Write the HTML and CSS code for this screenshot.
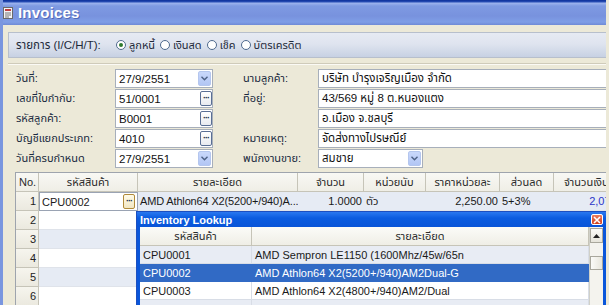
FILE: index.html
```html
<!DOCTYPE html>
<html>
<head>
<meta charset="utf-8">
<title>Invoices</title>
<link rel="stylesheet" href="styles.css">
</head>
<body>
<div class="window">
  <div class="titlebar">
    <svg class="app-icon" width="10" height="12" viewBox="0 0 10 12">
      <rect x="0.5" y="0.5" width="9" height="11" fill="#f4f4f4" stroke="#6a6a6a"/>
      <rect x="2" y="2" width="6" height="2" fill="#c04040"/>
      <line x1="2" y1="6" x2="8" y2="6" stroke="#777"/>
      <line x1="2" y1="8" x2="8" y2="8" stroke="#777"/>
      <line x1="2" y1="10" x2="6" y2="10" stroke="#777"/>
    </svg>
    <span class="title">Invoices</span>
  </div>
  <div class="client">
    <div class="radio-panel">
      <span class="radio-caption">รายการ (I/C/H/T):</span>
      <span class="radio checked"><i class="dot"></i>ลูกหนี้</span>
      <span class="radio"><i class="dot"></i>เงินสด</span>
      <span class="radio"><i class="dot"></i>เช็ค</span>
      <span class="radio"><i class="dot"></i>บัตรเครดิต</span>
    </div>
    <div class="form-panel">
      <div class="form">
        <div class="col col-left">
          <div class="row"><span class="label">วันที่:</span><span class="field f-left">27/9/2551<span class="drop"><svg width="7" height="5" viewBox="0 0 7 5"><path d="M0.5 0.8 L3.5 3.8 L6.5 0.8" fill="none" stroke="#4d6185" stroke-width="1.4"/></svg></span></span></div>
          <div class="row"><span class="label">เลขที่ใบกำกับ:</span><span class="field f-left">51/0001<span class="dots">···</span></span></div>
          <div class="row"><span class="label">รหัสลูกค้า:</span><span class="field f-left">B0001<span class="dots">···</span></span></div>
          <div class="row"><span class="label">บัญชีแยกประเภท:</span><span class="field f-left">4010<span class="dots">···</span></span></div>
          <div class="row"><span class="label">วันที่ครบกำหนด</span><span class="field f-left">27/9/2551<span class="drop"><svg width="7" height="5" viewBox="0 0 7 5"><path d="M0.5 0.8 L3.5 3.8 L6.5 0.8" fill="none" stroke="#4d6185" stroke-width="1.4"/></svg></span></span></div>
        </div>
        <div class="col col-right">
          <div class="row"><span class="label label-r">นามลูกค้า:</span><span class="field f-right">บริษัท บำรุงเจริญเมือง จำกัด</span></div>
          <div class="row"><span class="label label-r">ที่อยู่:</span><span class="field f-right">43/569 หมู่ 8 ต.หนองแตง</span></div>
          <div class="row"><span class="label label-r"></span><span class="field f-right">อ.เมือง จ.ชลบุรี</span></div>
          <div class="row"><span class="label label-r">หมายเหตุ:</span><span class="field f-right">จัดส่งทางไปรษณีย์</span></div>
          <div class="row"><span class="label label-r">พนักงานขาย:</span><span class="field f-combo">สมชาย<span class="drop"><svg width="7" height="5" viewBox="0 0 7 5"><path d="M0.5 0.8 L3.5 3.8 L6.5 0.8" fill="none" stroke="#4d6185" stroke-width="1.4"/></svg></span></span></div>
        </div>
      </div>
      <div class="grid">
        <div class="hd no">No.</div>
        <div class="hd">รหัสสินค้า</div>
        <div class="hd">รายละเอียด</div>
        <div class="hd">จำนวน</div>
        <div class="hd">หน่วยนับ</div>
        <div class="hd">ราคาหน่วยละ</div>
        <div class="hd">ส่วนลด</div>
        <div class="hd hd-last">จำนวนเงิน</div>

        <div class="rn">1</div>
        <div class="c alt editor">CPU0002<span class="dots dots-cell">···</span></div>
        <div class="c alt tight">AMD Athlon64 X2(5200+/940)A...</div>
        <div class="c alt num">1.0000</div>
        <div class="c alt">ตัว</div>
        <div class="c alt num">2,250.00</div>
        <div class="c alt">5+3%</div>
        <div class="c alt num amount">2,073.38</div>

        <div class="rn">2</div><div class="c"></div><div class="c"></div><div class="c"></div><div class="c"></div><div class="c"></div><div class="c"></div><div class="c"></div>
        <div class="rn">3</div><div class="c alt"></div><div class="c alt"></div><div class="c alt"></div><div class="c alt"></div><div class="c alt"></div><div class="c alt"></div><div class="c alt"></div>
        <div class="rn">4</div><div class="c"></div><div class="c"></div><div class="c"></div><div class="c"></div><div class="c"></div><div class="c"></div><div class="c"></div>
        <div class="rn">5</div><div class="c alt"></div><div class="c alt"></div><div class="c alt"></div><div class="c alt"></div><div class="c alt"></div><div class="c alt"></div><div class="c alt"></div>
        <div class="rn">6</div><div class="c"></div><div class="c"></div><div class="c"></div><div class="c"></div><div class="c"></div><div class="c"></div><div class="c"></div>
      </div>
    </div>
  </div>

  <div class="lookup">
    <div class="lk-title"><span>Inventory Lookup</span><span class="lk-close"><svg width="8" height="8" viewBox="0 0 8 8"><path d="M1 1 L7 7 M7 1 L1 7" stroke="#fff" stroke-width="1.6"/></svg></span></div>
    <div class="lk-body">
      <div class="lk-table">
        <div class="lk-hd">รหัสสินค้า</div>
        <div class="lk-hd">รายละเอียด</div>
        <div class="lk-c lk-alt">CPU0001</div>
        <div class="lk-c lk-alt">AMD Sempron LE1150 (1600Mhz/45w/65n</div>
        <div class="lk-c lk-sel">CPU0002</div>
        <div class="lk-c lk-sel">AMD Athlon64 X2(5200+/940)AM2Dual-G</div>
        <div class="lk-c">CPU0003</div>
        <div class="lk-c">AMD Athlon64 X2(4800+/940)AM2/Dual</div>
        <div class="lk-c lk-alt"></div>
        <div class="lk-c lk-alt"></div>
      </div>
      <div class="lk-scroll">
        <div class="sb-btn"><svg width="7" height="4" viewBox="0 0 7 4"><path d="M0 4 L3.5 0 L7 4 Z" fill="#222"/></svg></div>
        <div class="sb-thumb"></div>
      </div>
    </div>
  </div>
</div>
</body>
</html>
```

FILE: styles.css
```css
* { box-sizing: border-box; }

html, body {
  margin: 0;
  padding: 0;
  width: 609px;
  height: 305px;
  overflow: hidden;
  background: #ece9d8;
  font-family: "Liberation Sans", "Noto Sans Thai", "Tlwg Typo", "Loma", "Garuda", sans-serif;
  font-size: 11px;
  color: #1a1a1a;
}

.window {
  position: relative;
  width: 606px;
  height: 305px;
  border-left: 3px solid #7a96df;
  background: #ece9d8;
  overflow: hidden;
}

.titlebar {
  height: 25px;
  display: flex;
  align-items: center;
  gap: 5px;
  background: linear-gradient(to bottom, #0b2f9a 0, #2a4fb6 2px, #9db4ee 3px, #7e9ae2 6px, #7892de 16px, #7f9ee6 22px, #6f8ad6 25px);
}

.title {
  color: #fff;
  font-weight: bold;
  font-size: 15px;
  letter-spacing: 0.2px;
  text-shadow: 1px 1px 0 rgba(40, 60, 140, 0.5);
}

.client {
  padding-left: 5px;
}

.radio-panel {
  margin-top: 7px;
  height: 26px;
  display: flex;
  align-items: center;
  border: 1px solid #b7bfcc;
  border-right: 0;
  background: linear-gradient(to bottom, #e6eaf3 0%, #dfe4ef 45%, #c7d1e3 100%);
  padding-left: 7px;
  color: #1e2a3a;
}

.radio-caption {
  width: 100px;
  font-size: 11.5px;
}

.radio {
  display: inline-flex;
  align-items: center;
  margin-right: 5px;
}

.dot {
  width: 10px;
  height: 10px;
  border: 1px solid #4f6a8e;
  border-radius: 50%;
  background: #fff;
  margin-right: 3px;
  display: inline-flex;
  align-items: center;
  justify-content: center;
}

.checked .dot::after {
  content: "";
  width: 4px;
  height: 4px;
  border-radius: 50%;
  background: #2e7a2e;
}

.form-panel {
  margin-top: 5px;
  border-top: 1px solid #cfcbba;
  box-shadow: inset 0 1px 0 #fbfaf5;
  padding: 5px 0 0 7px;
}

.form {
  display: flex;
  gap: 29px;
}

.col {
  display: flex;
  flex-direction: column;
  gap: 1px;
}

.row {
  display: flex;
  align-items: center;
  height: 19px;
}

.label {
  width: 100px;
  padding-left: 1px;
  color: #1a2a40;
}

.label-r {
  width: 76px;
}

.field {
  position: relative;
  height: 19px;
  display: flex;
  align-items: center;
  background: #fff;
  border: 1px solid #a7afbb;
  padding-left: 3px;
  font-size: 11.5px;
  color: #111;
  white-space: nowrap;
}

.f-left { width: 98px; }
.f-right { width: 300px; }
.f-combo { width: 105px; }

.drop {
  position: absolute;
  right: 1px;
  top: 1px;
  width: 13px;
  height: 15px;
  border-radius: 2px;
  background: linear-gradient(to bottom, #c9d8fb, #b2c6f4);
  border: 1px solid #b4c6ee;
  display: flex;
  align-items: center;
  justify-content: center;
}

.dots {
  position: absolute;
  right: 0;
  top: 1px;
  width: 12px;
  height: 15px;
  border: 1px solid #5a6f95;
  border-radius: 2px;
  background: linear-gradient(to bottom, #ffffff, #e8ebf0);
  font-size: 9px;
  font-weight: bold;
  line-height: 12px;
  text-align: center;
  color: #1a2a4a;
  letter-spacing: -1px;
}

.grid {
  margin-top: 4px;
  display: grid;
  grid-template-columns: 23px 99px 160px 66px 62px 74px 54px 80px;
  grid-auto-rows: 19px;
  border-top: 1px solid #9ea4ad;
  border-left: 1px solid #9ea4ad;
  width: max-content;
}

.hd {
  display: flex;
  align-items: center;
  justify-content: center;
  background: linear-gradient(to bottom, #f8f8f4, #efeee6);
  border-right: 1px solid #c6c4b8;
  border-bottom: 1px solid #c6c4b8;
  color: #2a2a2a;
  white-space: nowrap;
  overflow: hidden;
}

.hd.no { justify-content: flex-start; padding-left: 3px; }

.hd-last { justify-content: flex-start; padding-left: 10px; }

.rn {
  display: flex;
  align-items: center;
  justify-content: flex-end;
  padding-right: 2px;
  background: linear-gradient(to bottom, #f6f5ee, #ebe9df);
  border-right: 1px solid #c6c4b8;
  border-bottom: 1px solid #c6c4b8;
  color: #222;
}

.c {
  display: flex;
  align-items: center;
  padding: 0 2px;
  background: #fff;
  border-bottom: 1px solid #dfe3ea;
  white-space: nowrap;
  overflow: hidden;
  color: #1a1a1a;
}

.c.alt { background: #e6ebf4; }

.c.tight { letter-spacing: -0.15px; padding-left: 2px; }

.c.num { justify-content: flex-end; }

.c.amount { color: #2b35c8; }

.c.editor {
  position: relative;
  background: #fff;
  border: 1px solid #9aa3b3;
  padding-left: 2px;
}

.dots-cell { right: 2px; top: 1px; border-color: #b08a3a; background: linear-gradient(to bottom, #fffbe9, #f1e6c2); }

.lookup {
  position: absolute;
  left: 134px;
  top: 212px;
  width: 469px;
  height: 100px;
  background: #fff;
  box-shadow: 0 0 0 1px #1c4fc0;
}

.lk-title {
  height: 15px;
  display: flex;
  align-items: center;
  justify-content: space-between;
  padding: 0 3px 0 3px;
  background: linear-gradient(to bottom, #2a78f0, #0b5ce0 40%, #0954d8 100%);
  color: #fff;
  font-weight: bold;
  font-size: 11px;
}

.lk-close {
  width: 12px;
  height: 11px;
  background: linear-gradient(to bottom, #ea7c5e, #d2401e);
  border: 1px solid #fff;
  border-radius: 2px;
  display: flex;
  align-items: center;
  justify-content: center;
}

.lk-body {
  display: flex;
  border-left: 3px solid #0a56da;
  border-right: 3px solid #0a56da;
  height: 85px;
}

.lk-table {
  display: grid;
  grid-template-columns: 112px 337px;
  grid-auto-rows: 18px;
  grid-template-rows: 19px;
  align-content: start;
}

.lk-hd {
  display: flex;
  align-items: center;
  justify-content: center;
  background: linear-gradient(to bottom, #fbfbf8, #efeee6);
  border-right: 1px solid #c6c4b8;
  border-bottom: 1px solid #c6c4b8;
  color: #2a2a2a;
}

.lk-c {
  display: flex;
  align-items: center;
  padding-left: 3px;
  border-bottom: 1px solid #d8dde6;
  border-right: 1px solid #d8dde6;
  background: #fff;
  font-size: 11px;
  white-space: nowrap;
  overflow: hidden;
  color: #1a1a1a;
}

.lk-alt { background: #e8ecf4; }

.lk-sel { background: #316ac5; color: #fff; border-color: #316ac5; }

.lk-scroll {
  width: 14px;
  background: #f4f3ee;
  border-left: 1px solid #d0d0c8;
  position: relative;
}

.sb-btn {
  height: 15px;
  margin-top: 1px;
  border: 1px solid #a9a79c;
  background: linear-gradient(to bottom, #fbfbf8, #e6e4da);
  display: flex;
  align-items: center;
  justify-content: center;
}

.sb-thumb {
  position: absolute;
  left: 0;
  right: 0;
  top: 29px;
  height: 14px;
  border: 1px solid #a9a79c;
  background: linear-gradient(to right, #fbfbf8, #e8e6dc);
}
```
